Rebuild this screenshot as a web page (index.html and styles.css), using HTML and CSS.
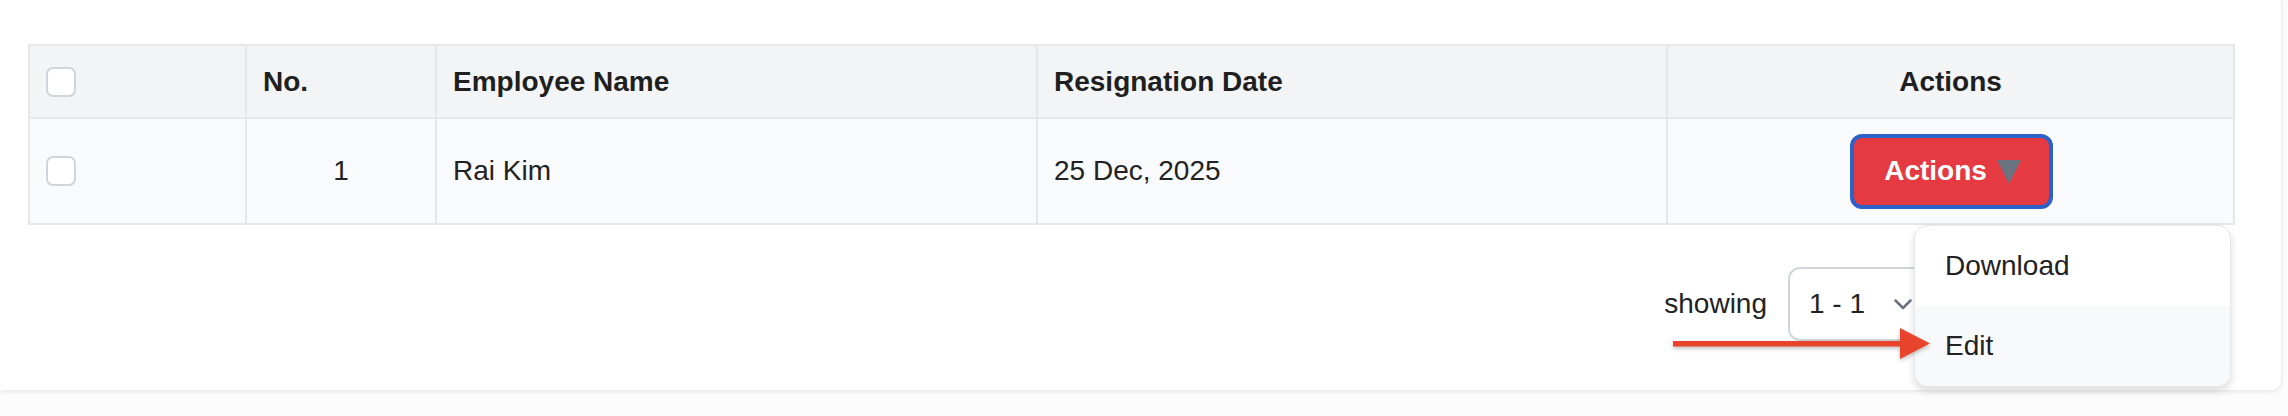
FILE: index.html
```html
<!DOCTYPE html>
<html lang="en">
<head>
<meta charset="utf-8">
<title>Resignations</title>
<link rel="stylesheet" href="styles.css">
</head>
<body>
<div class="page">
  <div class="card">
    <table class="grid">
      <colgroup>
        <col class="w-check"><col class="w-no"><col class="w-name"><col class="w-date"><col class="w-actions">
      </colgroup>
      <thead>
        <tr>
          <th><span class="checkbox"></span></th>
          <th>No.</th>
          <th>Employee Name</th>
          <th>Resignation Date</th>
          <th class="center">Actions</th>
        </tr>
      </thead>
      <tbody>
        <tr>
          <td><span class="checkbox"></span></td>
          <td class="center">1</td>
          <td>Rai Kim</td>
          <td>25 Dec, 2025</td>
          <td class="center actions-cell">
            <button class="btn-actions" type="button">Actions<svg class="caret" width="24" height="24" viewBox="0 0 24 24"><polygon points="0,0 24,0 12,24" fill="#6b7280"/></svg></button>
            <ul class="menu">
              <li class="menu-item">Download</li>
              <li class="menu-item hover">Edit</li>
            </ul>
          </td>
        </tr>
      </tbody>
    </table>
    <div class="pager">
      <span class="pager-label">showing</span>
      <div class="select">
        <span>1 - 1</span>
        <svg class="chev" width="18" height="11" viewBox="0 0 18 11"><polyline points="1.5,1.5 9,9 16.5,1.5" fill="none" stroke="#6b7280" stroke-width="2.5" stroke-linecap="round" stroke-linejoin="round"/></svg>
      </div>
    </div>
    <svg class="arrow" width="260" height="34" viewBox="0 0 260 34">
      <rect x="0" y="13" width="232" height="5.5" fill="#e8442b"/>
      <polygon points="227,0 257,15.5 227,31" fill="#e8442b"/>
    </svg>
  </div>
</div>
</body>
</html>
```

FILE: styles.css
```css
html, body {
  margin: 0;
  padding: 0;
}
body {
  background: #fcfcfc;
  font-family: "Liberation Sans", Arial, Helvetica, sans-serif;
  color: #222222;
  width: 2288px;
  height: 416px;
  overflow: hidden;
}
.page {
  padding: 0 6px 28px 0;
}
.card {
  position: relative;
  background: #ffffff;
  border-right: 1px solid #ececec;
  border-radius: 0 0 10px 0;
  box-shadow: 0 2px 4px rgba(0, 0, 0, 0.08);
  padding: 44px 48px 49px 28px;
}
.grid {
  width: 2205px;
  table-layout: fixed;
  border-collapse: collapse;
  border: 2px solid #e5e7eb;
  font-size: 28px;
}
.w-check { width: 217px; }
.w-no { width: 190px; }
.w-name { width: 601px; }
.w-date { width: 630px; }
.w-actions { width: 567px; }
.grid th, .grid td {
  border: 2px solid #e5e7eb;
  padding: 0 16px;
  text-align: left;
  vertical-align: middle;
}
.grid th {
  background: #f3f4f6;
  font-weight: 700;
  height: 71px;
  color: #1f1f1f;
}
.grid td {
  background: #f9fafb;
  height: 104px;
  color: #222222;
}
.grid .center {
  text-align: center;
}
.checkbox {
  display: block;
  width: 26px;
  height: 26px;
  border: 2px solid #d1d5db;
  border-radius: 7px;
  background: #ffffff;
}
.actions-cell {
  position: relative;
}
.btn-actions {
  display: inline-flex;
  align-items: center;
  gap: 10px;
  height: 75px;
  padding: 0 28px 0 30px;
  border: 4px solid #2a62c9;
  border-radius: 12px;
  background: #e53a42;
  color: #ffffff;
  font-family: "Liberation Sans", Arial, Helvetica, sans-serif;
  font-size: 28px;
  font-weight: 700;
  margin-left: 2px;
}
.caret {
  display: block;
  margin-top: 2px;
}
.menu {
  position: absolute;
  top: calc(100% + 2px);
  right: 2px;
  width: 315px;
  margin: 0;
  padding: 0;
  list-style: none;
  background: #ffffff;
  border: 1px solid #e5e7eb;
  border-radius: 14px;
  box-shadow: 0 4px 8px rgba(0, 0, 0, 0.14);
  overflow: hidden;
  text-align: left;
  z-index: 5;
}
.menu-item {
  height: 80px;
  display: flex;
  align-items: center;
  padding-left: 30px;
  font-size: 28px;
  color: #222222;
}
.menu-item.hover {
  background: #f8f9fb;
}
.pager {
  display: flex;
  justify-content: flex-end;
  align-items: center;
  gap: 21px;
  margin-top: 42px;
  padding-right: 293px;
  font-size: 28px;
}
.select {
  display: flex;
  align-items: center;
  justify-content: space-between;
  box-sizing: border-box;
  width: 152px;
  height: 74px;
  padding: 0 26px 0 19px;
  border: 2px solid #d1d5db;
  border-radius: 12px;
  background: #ffffff;
}
.arrow {
  position: absolute;
  left: 1673px;
  top: 328px;
  filter: drop-shadow(0 2px 2px rgba(0, 0, 0, 0.25));
  z-index: 6;
}
```
